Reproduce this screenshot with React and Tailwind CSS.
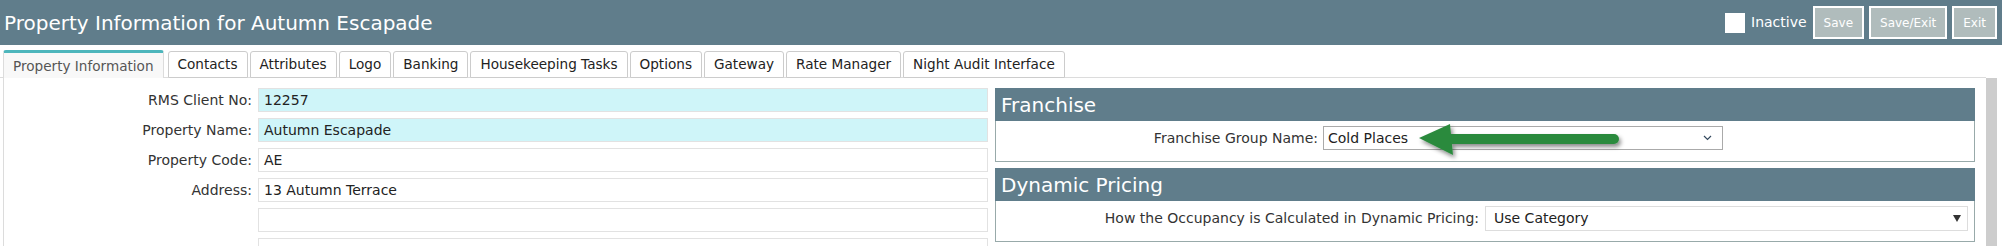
import React from 'react';

const tabs = [
  'Property Information',
  'Contacts',
  'Attributes',
  'Logo',
  'Banking',
  'Housekeeping Tasks',
  'Options',
  'Gateway',
  'Rate Manager',
  'Night Audit Interface',
];

const fields = [
  { label: 'RMS Client No:', value: '12257', locked: true },
  { label: 'Property Name:', value: 'Autumn Escapade', locked: true },
  { label: 'Property Code:', value: 'AE' },
  { label: 'Address:', value: '13 Autumn Terrace' },
  { label: '', value: '' },
  { label: '', value: '' },
];

function HeaderButton({ children }) {
  return (
    <button className="ml-[5px] h-[33px] px-[9px] border-2 border-white bg-[#b0bcbc] text-white text-[12px] leading-none">
      {children}
    </button>
  );
}

function PanelHeader({ children }) {
  return (
    <div className="h-[33px] bg-[#607d8b] text-white text-[20px] leading-[34px] pl-[6px]">
      {children}
    </div>
  );
}

export default function App() {
  return (
    <div className="relative w-[2002px] h-[246px] overflow-hidden bg-white font-['DejaVu_Sans',sans-serif] text-[#333]">
      {/* Title bar */}
      <header className="h-[45px] bg-[#607d8b] flex items-center justify-between pl-[4px] pr-[5px]">
        <h1 className="text-[20px] text-white leading-none">Property Information for Autumn Escapade</h1>
        <div className="flex items-center">
          <span className="w-[20px] h-[20px] bg-white" />
          <span className="ml-[6px] mr-[1px] text-[14px] text-white">Inactive</span>
          <HeaderButton>Save</HeaderButton>
          <HeaderButton>Save/Exit</HeaderButton>
          <HeaderButton>Exit</HeaderButton>
        </div>
      </header>

      <div className="flex h-[201px]">
        <div className="flex-1 flex flex-col">
          {/* Tabs */}
          <div className="mt-[5px] h-[28px] flex items-end pl-[3px] border-b border-[#dcdcdc]">
            {tabs.map((t, i) =>
              i === 0 ? (
                <div
                  key={t}
                  className="-mb-px h-[28px] px-[9px] pt-[1px] flex items-center border-t-[3px] border-t-[#4db6bc] border-x border-x-[#dcdcdc] rounded-t-[3px] bg-[#f8f8f8] text-[13.6px] text-[#555] mr-[2px]"
                >
                  {t}
                </div>
              ) : (
                <div
                  key={t}
                  className="-mb-px ml-[2px] h-[27px] px-[9px] flex items-center border border-[#cccccc] rounded-t-[3px] bg-white text-[13.6px] text-[#222]"
                >
                  {t}
                </div>
              )
            )}
          </div>

          {/* Content */}
          <div className="flex-1 flex ml-[3px] border-l border-[#dcdcdc] pt-[10px]">
            {/* Left form */}
            <div className="flex flex-col gap-[6px]">
              {fields.map((f, i) => (
                <div key={i} className="flex items-center h-[24px]">
                  <span className="w-[248px] text-right text-[14px] text-[#333]">{f.label}</span>
                  <div
                    className={`ml-[6px] w-[730px] h-[24px] border border-[#e2e2e2] pl-[5px] pt-[1px] flex items-center text-[14px] text-[#222] ${
                      f.locked ? 'bg-[#cff5f9]' : 'bg-white'
                    }`}
                  >
                    {f.value}
                  </div>
                </div>
              ))}
            </div>

            {/* Right panels */}
            <div className="ml-[7px] w-[980px] flex flex-col gap-[6px]">
              <div>
                <PanelHeader>Franchise</PanelHeader>
                <div className="h-[41px] border-x border-b border-[#98aaaa] flex items-start pt-[5px]">
                  <span className="w-[322px] text-right text-[14px] leading-[24px]">Franchise Group Name:</span>
                  <div className="ml-[5px] w-[400px] h-[24px] border border-[#aaaaaa] flex items-center justify-between pl-[4px] pr-[10px] text-[14px] text-[#222]">
                    <span>Cold Places</span>
                    <svg width="9" height="6" viewBox="0 0 9 6">
                      <polyline points="1,1 4.5,4.5 8,1" fill="none" stroke="#34495e" strokeWidth="1.2" />
                    </svg>
                  </div>
                </div>
              </div>
              <div>
                <PanelHeader>Dynamic Pricing</PanelHeader>
                <div className="h-[41px] border-x border-b border-[#98aaaa] flex items-start pt-[5px] pr-[6px]">
                  <span className="w-[483px] text-right text-[14px] leading-[25px]">
                    How the Occupancy is Calculated in Dynamic Pricing:
                  </span>
                  <div className="ml-[6px] flex-1 h-[25px] border border-[#dddddd] flex items-center justify-between pl-[8px] pr-[6px] text-[14px] text-[#222]">
                    <span>Use Category</span>
                    <svg width="8" height="7" viewBox="0 0 8 7">
                      <polygon points="0,0 8,0 4,7" fill="#333" />
                    </svg>
                  </div>
                </div>
              </div>
            </div>
          </div>
        </div>

        {/* Scrollbar */}
        <div className="w-[11px] mt-[33px] mr-[5px] bg-[#cdcdcd]" />
      </div>

      {/* Green annotation arrow */}
      <svg className="absolute left-[1410px] top-[116px]" width="225" height="50" viewBox="0 0 225 50">
        <defs>
          <filter id="sh" x="-20%" y="-50%" width="140%" height="200%">
            <feDropShadow dx="2" dy="3" stdDeviation="2" floodColor="#000" floodOpacity="0.45" />
          </filter>
        </defs>
        <g filter="url(#sh)">
          <line x1="38" y1="23" x2="204" y2="23" stroke="#2b8a3e" strokeWidth="10" strokeLinecap="round" />
          <polygon points="9,22 40,8 43,39" fill="#2b8a3e" />
        </g>
      </svg>
    </div>
  );
}
